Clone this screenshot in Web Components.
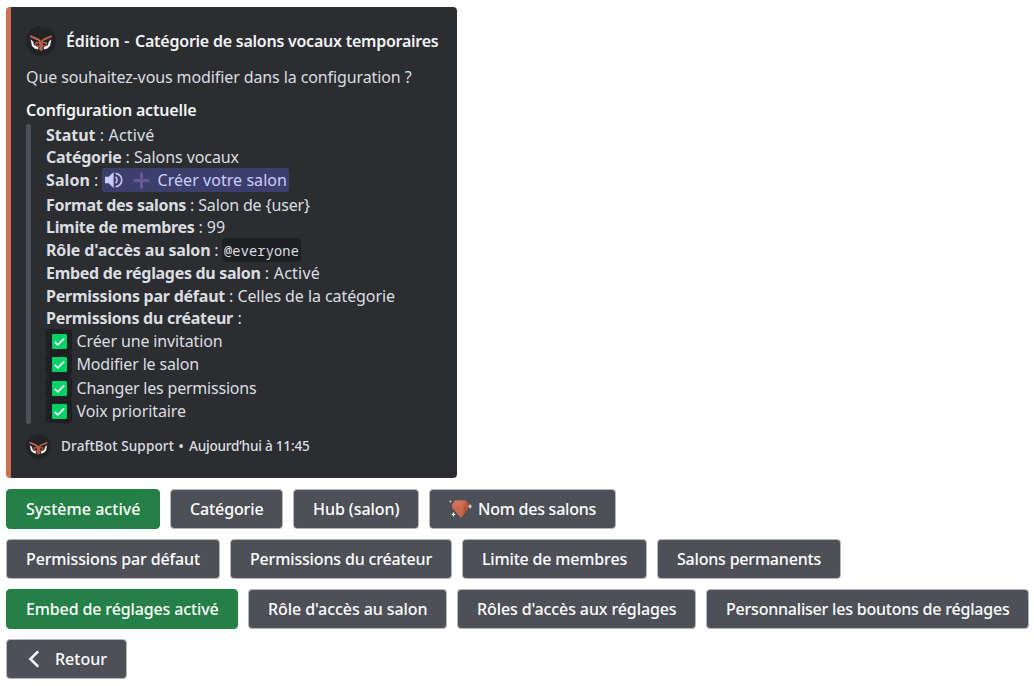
<!DOCTYPE html>
<html lang="fr">
<head>
<meta charset="utf-8">
<title>DraftBot – Édition</title>
<style>
body{margin:0;background:#fff;font-family:"Noto Sans","Open Sans",sans-serif;font-size:16px}
</style>
</head>
<body>
<bot-message></bot-message>
<script>
const define=(name,html,setup)=>{
  const t=document.createElement('template');t.innerHTML=html;
  customElements.define(name,class extends HTMLElement{
    constructor(){super();this.attachShadow({mode:'open'}).append(t.content.cloneNode(true));}
    connectedCallback(){if(setup)setup(this,this.shadowRoot);}
  });
};

/* A run of text tracked so that it fills the width given in "w". */
define('fit-text',`<style>:host{display:inline-block;white-space:pre;flex:none}span{display:inline-block}</style><span><slot></slot></span>`,(el,root)=>{
  const w=parseFloat(el.getAttribute('w')),s=root.querySelector('span');
  const n=el.textContent.length,nat=s.getBoundingClientRect().width;
  s.style.letterSpacing=((w-nat)/n)+'px';
  el.style.width=w+'px';
});

define('bot-avatar',`<style>:host{display:block;flex:none;width:30px;height:30px}svg{display:block;width:100%;height:100%}</style>
<svg viewBox="0 0 30 30"><circle cx="15" cy="15" r="15" fill="#212327"/>
<path d="M4.6 13.6 7 15.2 8.2 19.2 12.2 21 12.2 23.6 8.6 22.6 6 20zM25.4 13.6 23 15.2 21.8 19.2 17.8 21 17.8 23.6 21.4 22.6 24 20z" fill="#f2f2f2"/>
<path d="M4.3 10.2 12.3 13.6 15 16.4" fill="none" stroke="#c96a52" stroke-width="2"/>
<path d="M25.7 10.2 17.7 13.6 15 16.4" fill="none" stroke="#bd604a" stroke-width="2"/>
<path d="M13.2 15v8.4L15 25.2l1.8-1.8V15L15 16.2z" fill="#b95b45"/>
<path d="M13.6 16.7H9.8v3M13.6 20h-2.6M16.4 16.7h3.8v3M16.4 20H19" fill="none" stroke="#b95b45" stroke-width="1.4"/></svg>`);

define('channel-chip',`<style>:host{display:flex;align-items:center;box-sizing:border-box;width:187px;height:24px;padding-left:3px;border-radius:3px;background:#3c3f6b;color:#c9cdfb}
.v{width:18px;height:18px}.p{width:17px;height:17px;margin:0 7.5px 0 10px}</style>
<svg class="v" viewBox="0 0 18 18"><path d="M0 5.7h3.8L8.6 1v16L3.8 12.2H0z" fill="#c9cdfb"/><path d="M10.6 5.8Q13.5 9 10.6 12.2M10.6 2.2C18.8 4.2 18.8 13.8 10.6 15.8" fill="none" stroke="#c9cdfb" stroke-width="1.5"/></svg>
<svg class="p" viewBox="0 0 17 17"><path d="M8.5 1.8v13.4M1.8 8.5h13.4" stroke="#675997" stroke-width="3" stroke-linecap="round"/></svg>
<slot></slot>`);

define('code-chip',`<style>:host{display:flex;align-items:center;box-sizing:border-box;height:24px;width:79px;padding:1px 0 0 2px;border-radius:4px;background:#1e1f22;color:#dbdee1;font:13.6px "Noto Sans Mono","DejaVu Sans Mono",monospace}</style><slot></slot>`);

define('check-line',`<style>:host{display:flex;align-items:center;box-sizing:border-box}:host([up]){padding-bottom:1px}.b{width:26px;height:24px;border-radius:4px;background:#1e1f22;display:flex;align-items:center;justify-content:center;margin:0 4.5px 0 0}svg{width:15px;height:15px}</style>
<div class="b"><svg viewBox="0 0 15 15"><rect width="15" height="15" rx="1" fill="#00d166"/><path d="M2.7 7.8 5.8 10.8 12.3 4.3" fill="none" stroke="#fff" stroke-width="1.7"/></svg></div><slot></slot>`);

define('config-quote',`<style>:host{display:flex;height:300px;color:#dbdee1}.bar{width:5px;border-radius:3px;background:#4e5058;margin-right:15px}
.rows{display:grid;grid-template-rows:22px 22px 25px 23px 23px 22px 24px 22px 22px 24px 23px 24px 23px}
.r{display:flex;align-items:center;box-sizing:border-box;min-height:0;height:100%}.up{padding-bottom:1px}b{font-weight:700;display:flex}</style>
<div class="bar"></div><div class="rows">
<div class="r"><b><fit-text w="49.5">Statut</fit-text></b><fit-text w="59"> : Activé</fit-text></div>
<div class="r"><b><fit-text w="75.5">Catégorie</fit-text></b><fit-text w="117.5"> : Salons vocaux</fit-text></div>
<div class="r up"><b><fit-text w="44">Salon</fit-text></b><fit-text w="12"> : </fit-text><channel-chip><fit-text w="129.5">Créer votre salon</fit-text></channel-chip></div>
<div class="r"><b><fit-text w="140">Format des salons</fit-text></b><fit-text w="124"> : Salon de {user}</fit-text></div>
<div class="r up"><b><fit-text w="148.5">Limite de membres</fit-text></b><fit-text w="30.5"> : 99</fit-text></div>
<div class="r"><b><fit-text w="164.5">Rôle d'accès au salon</fit-text></b><fit-text w="11.5"> : </fit-text><code-chip><fit-text w="75">@everyone</fit-text></code-chip></div>
<div class="r"><b><fit-text w="214.5">Embed de réglages du salon</fit-text></b><fit-text w="59.5"> : Activé</fit-text></div>
<div class="r"><b><fit-text w="179">Permissions par défaut</fit-text></b><fit-text w="170"> : Celles de la catégorie</fit-text></div>
<div class="r"><b><fit-text w="187">Permissions du créateur</fit-text></b><fit-text w="9"> :</fit-text></div>
<check-line><fit-text w="146">Créer une invitation</fit-text></check-line>
<check-line up><fit-text w="122.5">Modifier le salon</fit-text></check-line>
<check-line><fit-text w="180">Changer les permissions</fit-text></check-line>
<check-line up><fit-text w="109.5">Voix prioritaire</fit-text></check-line>
</div>`);

define('embed-card',`<style>:host{display:block;box-sizing:border-box;width:451px;height:471px;background:#2b2d31;border-left:5px solid #cd6f57;border-radius:4px;padding:19px 15px 0;color:#f2f3f5}
.t{display:flex;align-items:center;height:30px;font-weight:600}
.t bot-avatar{margin-right:10px}
.d{color:#dbdee1;height:24px;margin-top:9px;display:flex;align-items:center}
.h{font-weight:600;height:24px;margin-top:9px;margin-bottom:2px;display:flex;align-items:center}
.f{display:flex;align-items:center;height:25px;margin-top:10px;font-size:13.6px;font-weight:500;color:#dbdee1}
.f bot-avatar{width:25px;height:25px;margin-right:10px}.f fit-text{margin-bottom:2px}</style>
<div class="t"><bot-avatar></bot-avatar><fit-text w="53.5">Édition</fit-text><fit-text w="15.5"> - </fit-text><fit-text w="303.5">Catégorie de salons vocaux temporaires</fit-text></div>
<div class="d"><fit-text w="385.5">Que souhaitez-vous modifier dans la configuration ?</fit-text></div>
<div class="h"><fit-text w="170.5">Configuration actuelle</fit-text></div>
<config-quote></config-quote>
<div class="f"><bot-avatar></bot-avatar><fit-text w="113">DraftBot Support</fit-text><fit-text w="15"> • </fit-text><fit-text w="120.5">Aujourd’hui à 11:45</fit-text></div>`);

define('action-button',`<style>:host{display:flex;align-items:center;box-sizing:border-box;height:40px;padding-left:19px;border:1px solid #b7b8bc;border-radius:4px;background:#4e5058;color:#fff;font-weight:500}
:host([green]){background:#248046;border-color:#248046}</style><slot name="icon"></slot><slot></slot>`,el=>{el.style.width=el.getAttribute('w')+'px';});

define('gem-icon',`<style>:host{display:block;width:23px;height:20px;margin-right:6px}svg{display:block}</style>
<svg width="23" height="20" viewBox="0 0 23 20"><path d="M6 1.5h11L20.2 6v2L12.4 18.6h-.8L2.8 8.4V6.6z" fill="#c96a50"/><path d="M6 1.5h8.5L13 6.5 5.5 8.2 2.8 6.6z" fill="#cd735b"/><path d="M17 1.5 20.2 6v2L12.4 18.6 15.4 7z" fill="#b5573f"/>
<path d="m21.3 5 .7 1.8 1 .7-1 .6-.7 1.8-.7-1.8-1.6-.6 1.6-.7zM4.5 12.8l.7 1.9 1.7.7-1.7.7-.7 1.9-.7-1.9-1.7-.7 1.7-.7z" fill="#fff"/><path d="m1.5 1 .5 1 .9.5-.9.5-.5 1-.5-1L.1 2.5 1 2z" fill="#cfd0d4"/></svg>`);

define('back-icon',`<style>:host{display:block;width:16px;height:20px;margin-right:13px}svg{display:block}</style>
<svg width="16" height="20" viewBox="0 0 16 20"><path d="M12.2 2.4 4.4 10l7.8 7.6" fill="none" stroke="#f2f3f5" stroke-width="2.6"/></svg>`);

define('bot-message',`<style>:host{display:flex;flex-direction:column;box-sizing:border-box;width:1034px;height:686px;padding:7px 0 0 6px;overflow:hidden}
.rows{display:flex;flex-direction:column;gap:10px;margin-top:11px}.row{display:flex;gap:10px}</style>
<embed-card></embed-card>
<div class="rows">
<div class="row"><action-button green w="154"><fit-text w="114.5">Système activé</fit-text></action-button><action-button w="113"><fit-text w="73.5">Catégorie</fit-text></action-button><action-button w="126"><fit-text w="86.5">Hub (salon)</fit-text></action-button><action-button w="187"><gem-icon slot="icon"></gem-icon><fit-text w="118">Nom des salons</fit-text></action-button></div>
<div class="row"><action-button w="214"><fit-text w="174">Permissions par défaut</fit-text></action-button><action-button w="222"><fit-text w="182">Permissions du créateur</fit-text></action-button><action-button w="185"><fit-text w="145">Limite de membres</fit-text></action-button><action-button w="184"><fit-text w="144">Salons permanents</fit-text></action-button></div>
<div class="row"><action-button green w="232"><fit-text w="192.5">Embed de réglages activé</fit-text></action-button><action-button w="199"><fit-text w="159.5">Rôle d'accès au salon</fit-text></action-button><action-button w="239"><fit-text w="199.5">Rôles d'accès aux réglages</fit-text></action-button><action-button w="323"><fit-text w="283.5">Personnaliser les boutons de réglages</fit-text></action-button></div>
<div class="row"><action-button w="121"><back-icon slot="icon"></back-icon><fit-text w="52">Retour</fit-text></action-button></div>
</div>`);
</script>
</body>
</html>
